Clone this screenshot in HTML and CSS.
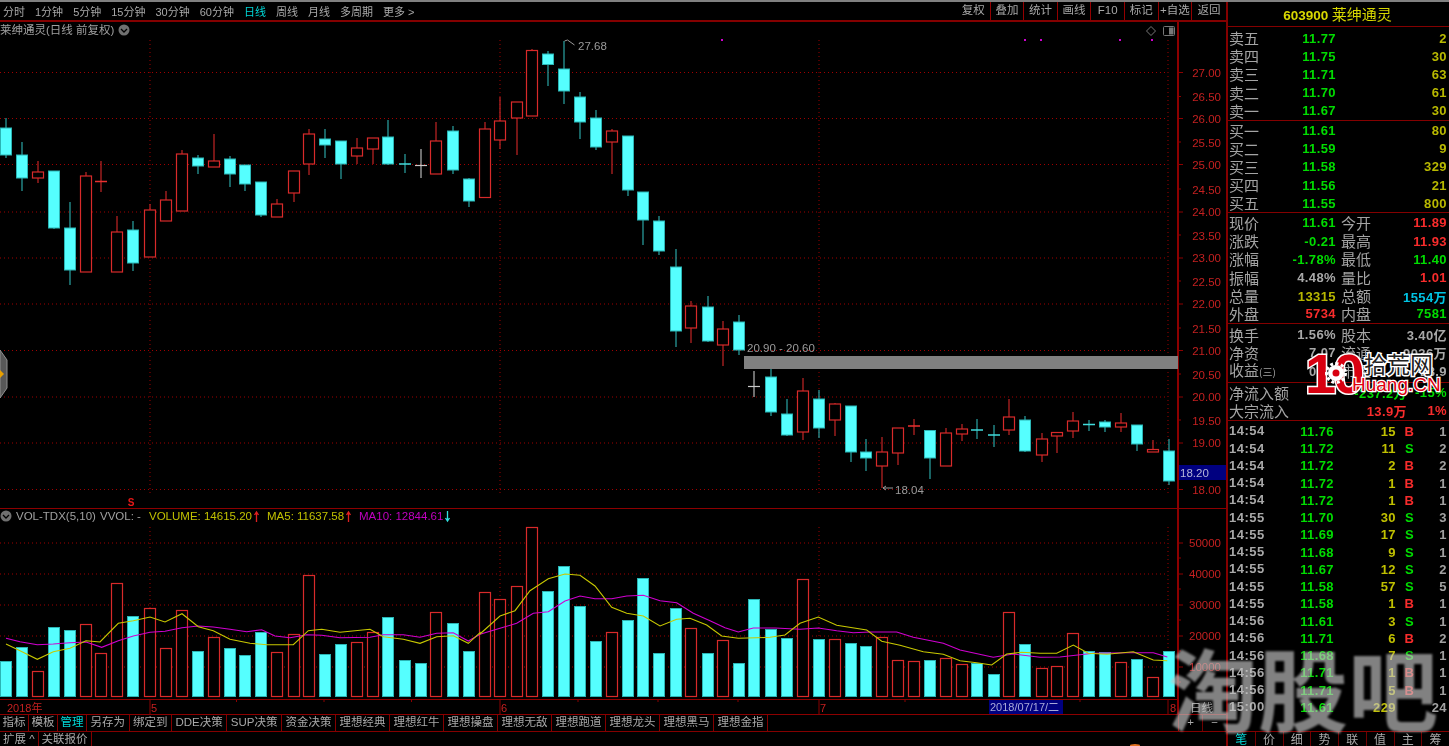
FILE: index.html
```html
<!DOCTYPE html>
<html lang="zh">
<head>
<meta charset="utf-8">
<title>莱绅通灵</title>
<link rel="stylesheet" href="styles.css">
</head>
<body>
<div class="app">
  <div class="main">
    <div class="toolbar">
      <nav class="periods">
        <span>分时</span><span>1分钟</span><span>5分钟</span><span>15分钟</span><span>30分钟</span><span>60分钟</span><span class="on">日线</span><span>周线</span><span>月线</span><span>多周期</span><span>更多 &gt;</span>
      </nav>
      <nav class="actions">
        <span>复权</span><span>叠加</span><span>统计</span><span>画线</span><span>F10</span><span>标记</span><span>+自选</span><span>返回</span>
      </nav>
    </div>
    <svg class="charts" viewBox="0 22 1227 693" width="1227" height="693">
      <g id="grid"></g>
      <g id="bars"></g>
      <g id="lines"></g>
      <g id="candles"></g>

      <text class="t-title" x="0" y="34">莱绅通灵(日线 前复权)</text>
      <circle class="ico" cx="124" cy="30" r="5.5"/>
      <path class="ico-mark" d="M121 29l3 3 3-3"/>
      <path class="ico-line" d="M1151 26.500l4.500 4.500-4.500 4.500-4.500-4.500z"/>
      <rect class="ico-line" x="1163.500" y="26.500" width="11" height="9" rx="1"/>
      <rect class="ico-fill" x="1169" y="27.500" width="4.500" height="7"/>

      <rect class="zone" x="744" y="356" width="434" height="13"/>
      <text class="t-note" x="747" y="352">20.90 - 20.60</text>
      <path class="note-line" d="M564.500 41l3-1 7 5"/>
      <text class="t-note" x="578" y="50">27.68</text>
      <path class="note-line" d="M893 488h-10m3-2l-3 2 3 2"/>
      <text class="t-note" x="895" y="494">18.04</text>
      <text class="t-sig" x="131" y="506" text-anchor="middle">S</text>

      <g class="axis">
        <text x="1221" y="77">27.00</text><text x="1221" y="101">26.50</text><text x="1221" y="123">26.00</text><text x="1221" y="147">25.50</text><text x="1221" y="169">25.00</text><text x="1221" y="194">24.50</text><text x="1221" y="216">24.00</text><text x="1221" y="240">23.50</text><text x="1221" y="262">23.00</text><text x="1221" y="286">22.50</text><text x="1221" y="308">22.00</text><text x="1221" y="333">21.50</text><text x="1221" y="355">21.00</text><text x="1221" y="379">20.50</text><text x="1221" y="401">20.00</text><text x="1221" y="425">19.50</text><text x="1221" y="447">19.00</text><text x="1221" y="494">18.00</text>
        <text x="1221" y="547">50000</text><text x="1221" y="578">40000</text><text x="1221" y="609">30000</text><text x="1221" y="640">20000</text><text x="1221" y="671">10000</text>
      </g>
      <rect class="price-tag" x="1179" y="465" width="47" height="15"/>
      <text class="t-tag" x="1180" y="477">18.20</text>

      <circle class="ico" cx="6" cy="516" r="5.500"/>
      <path class="ico-mark" d="M3 515l3 3 3-3"/>
      <text class="t-leg" x="16" y="520">VOL-TDX(5,10)</text>
      <text class="t-leg" x="100" y="520">VVOL: -</text>
      <text class="t-leg yellow" x="149" y="520">VOLUME: 14615.20</text>
      <path class="arrow-r" d="M256.500 522v-10m-2 3l2-3 2 3"/>
      <text class="t-leg yellow" x="267" y="520">MA5: 11637.58</text>
      <path class="arrow-r" d="M348.500 522v-10m-2 3l2-3 2 3"/>
      <text class="t-leg magenta" x="359" y="520">MA10: 12844.61</text>
      <path class="arrow-c" d="M447.500 511v10m-2-3l2 3 2-3"/>

      <g class="dates">
        <text x="7" y="712">2018年</text>
        <text x="151" y="712">5</text>
        <text x="501" y="712">6</text>
        <text x="820" y="712">7</text>
        <text x="1170" y="712">8</text>
      </g>
      <rect class="price-tag" x="989" y="700" width="74" height="14"/>
      <text class="t-date" x="990" y="711">2018/07/17/二</text>
      <text class="t-unit" x="1190" y="712">日线</text>
    </svg>
    <div class="tabs">
      <span class="short">指标</span><span class="short">模板</span><span class="short on">管理</span><span>另存为</span><span>绑定到</span><span>DDE决策</span><span>SUP决策</span><span>资金决策</span><span>理想经典</span><span>理想红牛</span><span>理想操盘</span><span>理想无敌</span><span>理想跑道</span><span>理想龙头</span><span>理想黑马</span><span>理想金指</span>
      <div class="tab-fill"></div>
      <div class="zoomer"><b>+</b><b>−</b></div>
    </div>
    <div class="tabs2">
      <span>扩展 ^</span><span>关联报价</span>
    </div>
  </div>

  <aside class="side">
    <header class="stock"><span class="code">603900</span> 莱绅通灵</header>
    <section class="book asks">
      <div><i>卖五</i><em class="g">11.77</em><s class="o">2</s></div>
      <div><i>卖四</i><em class="g">11.75</em><s class="o">30</s></div>
      <div><i>卖三</i><em class="g">11.71</em><s class="o">63</s></div>
      <div><i>卖二</i><em class="g">11.70</em><s class="o">61</s></div>
      <div><i>卖一</i><em class="g">11.67</em><s class="o">30</s></div>
    </section>
    <section class="book bids">
      <div><i>买一</i><em class="g">11.61</em><s class="o">80</s></div>
      <div><i>买二</i><em class="g">11.59</em><s class="o">9</s></div>
      <div><i>买三</i><em class="g">11.58</em><s class="o">329</s></div>
      <div><i>买四</i><em class="g">11.56</em><s class="o">21</s></div>
      <div><i>买五</i><em class="g">11.55</em><s class="o">800</s></div>
    </section>
    <section class="info">
      <div><i>现价</i><em class="g">11.61</em><i>今开</i><s class="r">11.89</s></div>
      <div><i>涨跌</i><em class="g">-0.21</em><i>最高</i><s class="r">11.93</s></div>
      <div><i>涨幅</i><em class="g">-1.78%</em><i>最低</i><s class="g">11.40</s></div>
      <div><i>振幅</i><em class="w">4.48%</em><i>量比</i><s class="r">1.01</s></div>
      <div><i>总量</i><em class="o">13315</em><i>总额</i><s class="c">1554万</s></div>
      <div><i>外盘</i><em class="r">5734</em><i>内盘</i><s class="g">7581</s></div>
    </section>
    <section class="info three">
      <div><i>换手</i><em class="w">1.56%</em><i>股本</i><s class="w">3.40亿</s></div>
      <div><i>净资</i><em class="w">7.07</em><i>流通</i><s class="w">9036万</s></div>
      <div><i>收益<small>(三)</small></i><em class="w">0.31</em><i>市盈</i><s class="w">18.9</s></div>
    </section>
    <section class="flow">
      <div><i>净流入额</i><em class="g">-237.2万</em><s class="g">-15%</s></div>
      <div><i>大宗流入</i><em class="r">13.9万</em><s class="r">1%</s></div>
    </section>
    <section class="trades">
      <div><i>14:54</i><em>11.76</em><b>15</b><u class="r">B</u><s>1</s></div>
      <div><i>14:54</i><em>11.72</em><b>11</b><u class="g">S</u><s>2</s></div>
      <div><i>14:54</i><em>11.72</em><b>2</b><u class="r">B</u><s>2</s></div>
      <div><i>14:54</i><em>11.72</em><b>1</b><u class="r">B</u><s>1</s></div>
      <div><i>14:54</i><em>11.72</em><b>1</b><u class="r">B</u><s>1</s></div>
      <div><i>14:55</i><em>11.70</em><b>30</b><u class="g">S</u><s>3</s></div>
      <div><i>14:55</i><em>11.69</em><b>17</b><u class="g">S</u><s>1</s></div>
      <div><i>14:55</i><em>11.68</em><b>9</b><u class="g">S</u><s>1</s></div>
      <div><i>14:55</i><em>11.67</em><b>12</b><u class="g">S</u><s>2</s></div>
      <div><i>14:55</i><em>11.58</em><b>57</b><u class="g">S</u><s>5</s></div>
      <div><i>14:55</i><em>11.58</em><b>1</b><u class="r">B</u><s>1</s></div>
      <div><i>14:56</i><em>11.61</em><b>3</b><u class="g">S</u><s>1</s></div>
      <div><i>14:56</i><em>11.71</em><b>6</b><u class="r">B</u><s>2</s></div>
      <div><i>14:56</i><em>11.68</em><b>7</b><u class="g">S</u><s>1</s></div>
      <div><i>14:56</i><em>11.71</em><b>1</b><u class="r">B</u><s>1</s></div>
      <div><i>14:56</i><em>11.71</em><b>5</b><u class="r">B</u><s>1</s></div>
      <div><i>15:00</i><em>11.61</em><b>229</b><u></u><s>24</s></div>
    </section>
    <footer class="sidetabs">
      <span class="on">笔</span><span>价</span><span>细</span><span>势</span><span>联</span><span>值</span><span>主</span><span>筹</span>
    </footer>
  </aside>

  <svg class="collapse" viewBox="0 0 8 48" width="8" height="48">
    <path class="collapse-body" d="M0 0l7 10v28l-7 10z"/>
    <path class="collapse-arrow" d="M0 20l4 4-4 4z"/>
  </svg>

  <svg class="logo" viewBox="0 0 134 44" width="134" height="44">
    <text class="logo-ten" x="0" y="42">10</text>
    <circle class="logo-teeth" cx="31" cy="22" r="9.500"/>
    <circle class="logo-gear" cx="31" cy="22" r="8"/>
    <circle class="logo-hub" cx="31" cy="22" r="3.500"/>
    <text class="logo-cn" x="59" y="22">拾荒网</text>
    <text class="logo-en" x="47" y="40">Huang.CN</text>
  </svg>

  <div class="ember"></div>
  <div class="watermark">淘股吧</div>
</div>
<script src="chart.js"></script>
</body>
</html>
```
FILE: styles.css
```css
* { box-sizing: border-box; }
html, body { margin: 0; height: 100%; background: #000; overflow: hidden; }
body { font-family: "Liberation Sans", "Noto Sans CJK SC", sans-serif; color: #a8a8a8; }
i, em, s, u, b { font-style: normal; text-decoration: none; font-weight: normal; }

.app { position: relative; display: flex; width: 1449px; height: 746px; border-top: 2px solid #808080; }
.main { width: 1226px; flex: none; display: flex; flex-direction: column; filter: blur(0.3px); }

.toolbar { height: 20px; display: flex; justify-content: space-between; border-bottom: 2px solid #840000; font-size: 11px; }
.periods { display: flex; gap: 10px; padding-left: 3px; align-items: center; }
.periods .on { color: #00d8d8; }
.actions { display: flex; width: 269px; font-size: 11.500px; }
.actions span { width: 33.6px; border-right: 1px solid #940000; text-align: center; line-height: 17px; }
.actions span:last-child { border-right: 0; }

.charts { display: block; flex: none; }
.grid-line { stroke: #a00000; stroke-width: 1; stroke-dasharray: 1 3; fill: none; }
.frame-line { stroke: #8c0000; stroke-width: 1; fill: none; }
.frame-thick { stroke: #8c0000; stroke-width: 2; fill: none; }
.wick-up { stroke: #c42626; stroke-width: 1.200; }
.wick-down { stroke: #2ba5a5; stroke-width: 1.200; }
.wick-flat { stroke: #b8b8b8; stroke-width: 1.200; }
.body-up { fill: #000; stroke: #d82a2a; stroke-width: 1.200; }
.body-down { fill: #55ffff; stroke: #2bb5b5; stroke-width: 1; }
.doji-up { stroke: #e83030; stroke-width: 1.500; }
.doji-down { stroke: #40dcdc; stroke-width: 1.500; }
.doji-flat { stroke: #c8c8c8; stroke-width: 1.200; }
.ma5 { fill: none; stroke: #c8c800; stroke-width: 1.100; }
.ma10 { fill: none; stroke: #d000d0; stroke-width: 1.100; }
.dot { fill: #d000d0; }

.t-title, .t-note, .t-leg, .t-tag, .t-date, .t-unit { font-family: "Liberation Sans", "Noto Sans CJK SC", sans-serif; fill: #a0a0a0; }
.t-title { font-size: 11.500px; }
.t-note { font-size: 11.500px; fill: #9a9a9a; }
.t-sig { font-size: 10px; font-weight: bold; fill: #e81818; }
.t-leg { font-size: 11.500px; }
.t-leg.yellow { fill: #c0c000; }
.t-leg.magenta { fill: #c000c0; }
.t-tag { font-size: 11.500px; fill: #b4b4d8; }
.t-date { font-size: 11px; fill: #a8a8d8; }
.t-unit { font-size: 11.500px; }
.axis text { font-family: "Liberation Sans", sans-serif; font-size: 11.500px; fill: #c42020; text-anchor: end; }
.dates text { font-family: "Liberation Sans", "Noto Sans CJK SC", sans-serif; font-size: 11px; fill: #c42020; }
.ico { fill: #707070; }
.ico-mark { fill: none; stroke: #000; stroke-width: 1.300; }
.ico-line { fill: none; stroke: #777; stroke-width: 1; }
.ico-fill { fill: #777; }
.zone { fill: #808080; }
.note-line { fill: none; stroke: #999; stroke-width: 1; }
.price-tag { fill: #000080; }
.arrow-r { fill: none; stroke: #e02020; stroke-width: 1.300; }
.arrow-c { fill: none; stroke: #30e0e0; stroke-width: 1.300; }

.tabs { height: 17px; flex: none; display: flex; border-bottom: 1px solid #840000; font-size: 11.500px; line-height: 15px; }
.tabs span { padding: 0 3.500px; border-right: 1px solid #840000; white-space: nowrap; }
.tabs .short { padding: 0 2.500px; }
.tabs .on { color: #00d8d8; }
.tab-fill { flex: 1; border-right: 1px solid #8c0000; }
.zoomer { width: 47px; display: flex; }
.zoomer b { flex: 1; text-align: center; color: #aaa; border-right: 1px solid #700000; }
.zoomer b:last-child { border-right: 0; }
.tabs2 { display: flex; font-size: 11.500px; line-height: 14px; }
.tabs2 span { padding: 0 3px; border-right: 1px solid #840000; white-space: nowrap; }

.side { flex: 1; border-left: 2px solid #840000; display: flex; flex-direction: column; font-size: 13px; letter-spacing: 0.4px; filter: blur(0.3px); }
.stock { height: 25px; border-bottom: 1.500px solid #840000; color: #d8d800; font-family: "Noto Sans CJK SC", sans-serif; font-size: 15px; text-align: center; line-height: 23px; padding-right: 2px; letter-spacing: 0; }
.code { font-family: "Liberation Sans", sans-serif; font-size: 13.500px; font-weight: bold; }
.side section { border-bottom: 1.500px solid #840000; }
.side section > div { height: 18.200px; display: grid; align-items: center; white-space: nowrap; }
.side i { font-family: "Noto Sans CJK SC", sans-serif; font-size: 15px; line-height: 18px; letter-spacing: 0; color: #a4a4a4; padding-left: 1px; }
.side small { font-size: 10px; }
.side em, .side s, .trades b, .trades u { font-weight: bold; }
.asks { padding-top: 2px; }
.bids { padding-top: 0.500px; }
.info { padding-top: 0.500px; }
.book > div { grid-template-columns: 70px 38px 1fr; }
.info > div { grid-template-columns: 60px 48px 5px 30px 1fr; }
.info > div i:nth-of-type(2) { grid-column: 4; padding-left: 0; }
.info > div em, .book > div em { text-align: right; }
.info > div em { grid-column: 2; }
.info > div s { grid-column: 5; }
.side s { text-align: right; padding-right: 2px; }
.side .three { height: 59px; padding-top: 1px; }
.flow { padding-bottom: 1px; }
.flow > div { grid-template-columns: 84px 95px 1fr; }
.flow em { text-align: right; }

.side .trades { flex: 1; border-bottom: 1px solid #840000; padding-top: 1px; }
.side .trades > div { height: 17.250px; grid-template-columns: 70px 36px 62px 21px 1fr; }
.trades i { font-family: "Liberation Sans", sans-serif; font-size: 13px; font-weight: bold; letter-spacing: 0.5px; color: #a8a8a8; }
.trades em { color: #00dc00; text-align: right; }
.trades b { color: #c0c000; text-align: right; }
.trades u { text-align: center; padding-left: 6px; }
.trades s { color: #a0a0a0; }

.g { color: #00dc00; }
.r { color: #f82c2c; }
.o { color: #b8b800; }
.c { color: #00c4e4; }
.w { color: #a8a8a8; }

.sidetabs { height: 14px; display: flex; font-family: "Noto Sans CJK SC", sans-serif; font-size: 12px; line-height: 14px; letter-spacing: 0; }
.sidetabs span { flex: 1; text-align: center; border-right: 1px solid #700000; }
.sidetabs span:last-child { border-right: 0; }
.sidetabs .on { color: #00d8d8; }

.collapse { position: absolute; left: 0; top: 348px; }
.collapse-body { fill: #585858; stroke: #909090; stroke-width: 1; }
.collapse-arrow { fill: #e8a000; }

.logo { position: absolute; left: 1305px; top: 349px; overflow: visible; }
.logo-ten { font-family: "Liberation Sans", sans-serif; font-size: 56px; font-weight: bold; fill: #d80010; stroke: #fff; stroke-width: 3px; paint-order: stroke; letter-spacing: -3px; }
.logo-teeth { fill: none; stroke: #fff; stroke-width: 3px; stroke-dasharray: 3 2.500; }
.logo-gear { fill: #fff; }
.logo-hub { fill: #d80010; }
.logo-cn { font-family: "Noto Sans CJK SC", sans-serif; font-size: 23px; fill: #222; stroke: #fff; stroke-width: 3px; paint-order: stroke; }
.logo-en { font-family: "Liberation Sans", sans-serif; font-size: 19px; fill: #e00010; stroke: #fff; stroke-width: 2.500px; paint-order: stroke; }

.ember { position: absolute; left: 1130px; top: 742px; width: 10px; height: 3px; border-radius: 50%; background: #e07020; }

.watermark { position: absolute; left: 1168px; top: 624px; width: 290px; font-family: "Noto Sans CJK SC", sans-serif; font-size: 90px; font-weight: 700; line-height: 120px; white-space: nowrap; color: rgba(196, 196, 196, 0.66); filter: blur(1px); pointer-events: none; }
```
FILE: chart.js
```js
(function () {
  var NS = 'http://www.w3.org/2000/svg';
  function el(parent, tag, attrs) {
    var e = document.createElementNS(NS, tag);
    for (var k in attrs) e.setAttribute(k, attrs[k]);
    parent.appendChild(e);
    return e;
  }
  // x, high, top, bottom, low, type (u=up, d=down, f=flat)
  var C = [
    [6,118,128,155,158,'d'],[21.5,142,155,178,191,'d'],[38,161,172,178,183,'u'],[53.5,171,171,228,229,'d'],
    [69.5,202,228,270,285,'d'],[86,172,176,272,272,'u'],[101,161,181.5,181.5,192,'u'],[117,216,232,272,272,'u'],
    [133,221,230,263,271,'d'],[150,204,210,257,257,'u'],[165.5,191,200,221,221,'u'],[181.5,150,154,211,211,'u'],
    [198,155,158,166,174,'d'],[214,134,161,167,167,'u'],[230,156,159,174,187,'d'],[245,165,165,184,191,'d'],
    [261,182,182,215,217,'d'],[277,199,204,217,217,'u'],[293.5,171,171,193,202,'u'],[309,129,134,164,175,'u'],
    [325,129,139,145,158,'d'],[341,141,141,164,179,'d'],[357,138,148,156,164,'u'],[373,138,138,149,164,'u'],
    [388,120,137,164,165,'d'],[405,154,164,164,173,'d'],[420.5,149,165.5,165.5,178,'f'],[436,122,141,174,174,'u'],
    [453,126,131,170,174,'d'],[468.5,178,179,201,207,'d'],[484.5,122,129,197.5,197.5,'u'],[500,97,121,140,149,'u'],
    [516.5,102,102,118,155,'u'],[532,49,50.5,116,116,'u'],[548,51,54,64.5,86,'d'],[564,41,69,91,104,'d'],
    [579.5,92,97,122,139,'d'],[596,110,118,147,150,'d'],[611.5,129,131,142,174,'u'],[628,136,136,190,196,'d'],
    [643,192,192,220,245,'d'],[659,216,221,251,255,'d'],[675.5,249,267,331,347,'d'],[691,301,306,328,343,'u'],
    [707.5,296,307,341,342,'d'],[722.5,321,329,345,366,'u'],[738.5,315,322,350,355,'d'],[754,371,386.5,386.5,397,'f'],
    [771,369,377,412,416,'d'],[787,399,414,435,436,'d'],[802.5,378,391,432,440,'u'],[818.5,390,399,428,438,'d'],
    [834.5,403,404,420,436,'u'],[850.5,406,406,452,462,'d'],[866,439,452,458,471,'d'],[882,437,452,466,488,'u'],
    [898,428,428,453,465,'u'],[914,419,426,426,435,'u'],[930,430.5,430.5,458,479,'d'],[946,428,433,466,466,'u'],
    [962,424,429,434,441,'u'],[977,419,430,430,439,'d'],[994,425,435,435,447,'d'],[1009,399,417,430,435,'u'],
    [1025,416,420,451,452,'d'],[1041.5,433,439,455,462,'u'],[1057,432.5,432.5,436,453,'u'],[1073,412,421,431,438,'u'],
    [1089,420,424.5,424.5,431,'d'],[1105,420,422,427,432,'d'],[1121,413,423,427,432,'u'],[1137,425,425,444,451,'d'],
    [1153,440,449.5,452,452,'u'],[1169,439,451,481,485,'d']
  ];
  var V = [661,647,671,627,630,624,653,583,616,608,648,610,651,637,648,655,632,652,634,575,654,644,642,632,617,660,663,612,623,651,592,599,586,527,591,566,606,641,632,620,578,653,608,628,653,640,663,599,629,638,579,639,639,643,646,637,660,661,660,658,664,663,674,612,644,668,666,633,651,652,662,659,677,651];

  var grid = document.getElementById('grid');
  var priceY = [72.5,118.5,164.5,212,258,304,350.5,397,443,489.5];
  var volY = [543,574,605,636,667];
  priceY.forEach(function (y) { el(grid, 'line', {x1:0, x2:1168, y1:y, y2:y, 'class':'grid-line'}); });
  volY.forEach(function (y) { el(grid, 'line', {x1:0, x2:1168, y1:y, y2:y, 'class':'grid-line'}); });
  [150,500,819,1168].forEach(function (x) {
    el(grid, 'line', {x1:x, x2:x, y1:40, y2:493, 'class':'grid-line'});
    el(grid, 'line', {x1:x, x2:x, y1:527, y2:696, 'class':'grid-line'});
    el(grid, 'line', {x1:x, x2:x, y1:700, y2:714, 'class':'frame-line'});
  });
  [[0,508.5,1226,508.5],[0,699.5,1178,699.5],[0,714.5,1226,714.5]].forEach(function (l) {
    el(grid, 'line', {x1:l[0], y1:l[1], x2:l[2], y2:l[3], 'class':'frame-line'});
  });
  el(grid, 'line', {x1:1178, y1:22, x2:1178, y2:715, 'class':'frame-thick'});
  // axis ticks: major at the labelled lines, minor half way
  priceY.forEach(function (y) { el(grid, 'line', {x1:1179, x2:1183, y1:y, y2:y, 'class':'frame-line'}); });
  [96.5,142,189,235,281,328,374,420,466].forEach(function (y) { el(grid, 'line', {x1:1179, x2:1181, y1:y, y2:y, 'class':'frame-line'}); });
  volY.forEach(function (y) { el(grid, 'line', {x1:1179, x2:1183, y1:y, y2:y, 'class':'frame-line'}); });
  [558,589,620,651,682].forEach(function (y) { el(grid, 'line', {x1:1179, x2:1181, y1:y, y2:y, 'class':'frame-line'}); });
  [236.5,324,411.5,578,658,738,905,1080].forEach(function (x) { el(grid, 'line', {x1:x, x2:x, y1:700, y2:702, 'class':'frame-line'}); });
  // marker dots
  [722,1025,1041,1120,1152].forEach(function (x) { el(grid, 'rect', {x:x-1, y:39, width:2, height:2, 'class':'dot'}); });

  var bars = document.getElementById('bars');
  C.forEach(function (c, i) {
    var up = c[5] === 'u';
    var x = Math.round(c[0]) - 5.5;
    el(bars, 'rect', {x:x, y:V[i]+0.5, width:11, height:696.5-V[i]-0.5, 'class': up ? 'body-up' : 'body-down'});
  });

  var candles = document.getElementById('candles');
  C.forEach(function (c) {
    var x = Math.round(c[0]);
    var t = c[5];
    var kind = t === 'u' ? 'up' : t === 'd' ? 'down' : 'flat';
    el(candles, 'line', {x1:x, x2:x, y1:c[1], y2:c[4], 'class':'wick-' + kind});
    if (c[2] === c[3]) {
      el(candles, 'line', {x1:x-6, x2:x+6, y1:c[2], y2:c[2], 'class':'doji-' + kind});
    } else {
      el(candles, 'rect', {x:x-5.5, y:c[2], width:11, height:c[3]-c[2], 'class':'body-' + kind});
    }
  });

  // moving averages traced in 3x reference-crop coordinates: [xOffset, points]
  var M5 = [[0,[18,432,60,452,112,478,160,455,210,445,258,422,300,426,355,370,400,362,450,351,495,366,546,341,595,380,640,392,690,418,750,430,800,434,880,434,925,392,965,388,1020,397,1110,388,1150,410,1210,418,1260,430,1310,410,1360,407,1405,430,1440,398]],
            [480,[0,402,60,348,105,332,150,272,205,236,255,222,300,226,345,258,395,322,440,340,490,348,540,378,590,358,630,355,680,375,725,408,775,415,870,412,915,405,960,370,1015,351,1070,376,1160,390,1205,424,1260,436,1330,455,1390,463,1440,482]],
            [960,[0,482,50,488,95,495,140,462,185,457,240,460,290,460,340,435,385,460,440,463,520,455,580,480,622,482]]];
  var M10 = [[0,[18,415,60,425,112,434,160,432,210,428,258,426,305,442,355,422,400,408,450,397,495,394,546,383,595,378,640,381,690,388,740,395,785,389,825,408,870,413,920,404,965,406,1020,413,1110,412,1150,404,1210,404,1260,412,1310,400,1360,398,1405,423,1440,403]],
             [480,[0,403,60,385,110,370,160,340,205,335,255,303,300,288,345,296,395,296,440,288,490,286,540,302,590,308,640,340,690,362,735,383,775,396,820,384,885,384,960,388,1015,384,1070,392,1120,398,1170,396,1250,396,1300,412,1390,430,1440,450]],
             [960,[0,450,100,472,160,462,240,472,300,471,400,460,500,458,580,458,622,471]]];
  function points(segs) {
    var out = [];
    segs.forEach(function (s) {
      for (var i = 0; i < s[1].length; i += 2) {
        out.push((s[0] + s[1][i] / 3).toFixed(1) + ',' + (500 + s[1][i + 1] / 3).toFixed(1));
      }
    });
    return out.join(' ');
  }
  var lines = document.getElementById('lines');
  el(lines, 'polyline', {points: points(M10), 'class':'ma10'});
  el(lines, 'polyline', {points: points(M5), 'class':'ma5'});
})();
```
